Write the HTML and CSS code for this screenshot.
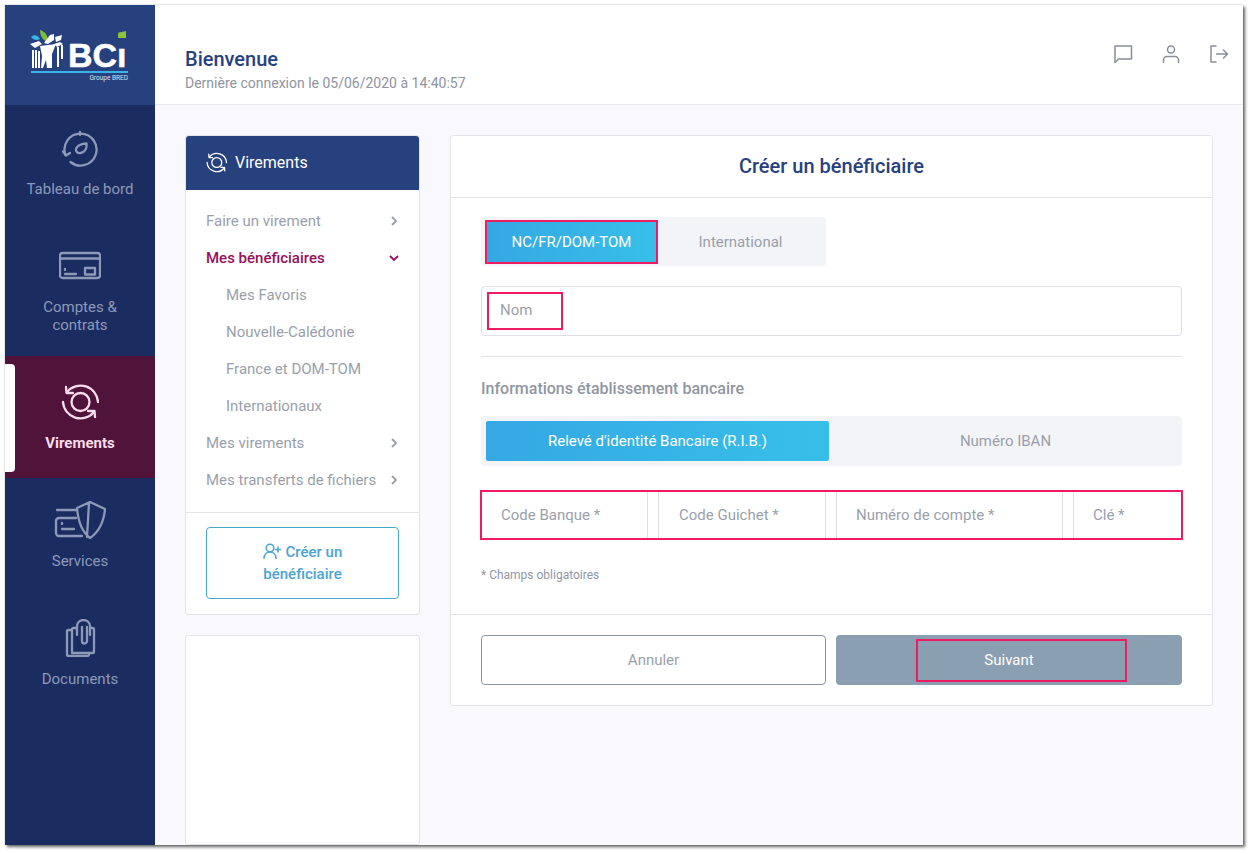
FILE: index.html
```html
<!DOCTYPE html>
<html lang="fr">
<head>
<meta charset="utf-8">
<title>BCI - Créer un bénéficiaire</title>
<link rel="stylesheet" href="styles.css">
</head>
<body>
<div class="window">
  <aside class="sidebar">
    <div class="logo">
      <svg class="logo-tree" viewBox="0 0 38 40" width="38" height="40">
        <path class="leaf-green" d="M10 0C16 2 18 6 18 12 13 11 10 6 10 0z"/>
        <path class="leaf-blue" d="M1 7C4 4 8 5 10 9 7 11 3 10 1 7z"/>
        <path class="leaf-white" d="M0 14l9-3 3 3-7 4zM14 13l6-8 4-1v6l-6 4zM25 7l7-2-1 5-5 2zM24 14l6-2 3 2-6 3z"/>
        <path class="trunk" d="M10 16l16-2-2 5-2 5v14h-5l-1-8-3 8h-2l1-12zM2 20h2v18H2zM5 20h2v18H5zM8 21h2v17H8zM27 17h2v20h-2zM31 15h2v14h-2z"/>
      </svg>
      <div class="logo-word">
        <span class="logo-bci">BC<span class="logo-i">ı</span></span>
        <span class="logo-bar"></span>
        <span class="logo-sub">Groupe BRED</span>
      </div>
    </div>
    <nav class="nav">
      <a class="nav-item nav-first">
        <svg class="nav-icon" viewBox="0 0 38 38"><path d="M4.500 26A16 16 0 1 1 9.500 33"/><path d="M2 22.500l3 4 4-2.500"/><path d="M19 3v3"/><path d="M25.500 14.500c.5 4-1 8.500-6 9.500-3 .5-5-1.500-4.500-4 .7-3.500 6-5.500 10.500-5.500z"/></svg>
        <span>Tableau de bord</span>
      </a>
      <a class="nav-item nav-second">
        <svg class="nav-icon" viewBox="0 0 42 38"><rect x="1" y="6" width="40" height="25" rx="2.500"/><path d="M1 11.500h40M6 27h11M6 22v1"/><rect x="26" y="21" width="10" height="6.500"/></svg>
        <span>Comptes &amp;<br>contrats</span>
      </a>
      <a class="nav-item nav-active">
        <svg class="nav-icon" viewBox="0 0 38 38"><circle cx="19.500" cy="19" r="9"/><path d="M6 9A17.500 17.500 0 0 1 37 19"/><path d="M33 29A17.500 17.500 0 0 1 2 19"/><path d="M5 4l.5 6H12"/><path d="M34 34l-.5-6H27"/></svg>
        <span>Virements</span>
      </a>
      <a class="nav-item">
        <svg class="nav-icon" viewBox="0 0 52 38"><path d="M3 9h19M22 17H5a3 3 0 0 0-3 3v12a3 3 0 0 0 3 3h23M8 22v1M8 28h12"/><path d="M23 7l13-6 15 7c-1 11-5 22-15 29-8-6-12-18-13-30zM35 2l-2 34"/></svg>
        <span>Services</span>
      </a>
      <a class="nav-item">
        <svg class="nav-icon" viewBox="0 0 38 38"><path d="M11 11H7.500A1.500 1.500 0 0 0 6 12.500v23A1.500 1.500 0 0 0 7.500 37h19a1.500 1.500 0 0 0 1.500-1.500V34"/><path d="M16 9h-3.500A1.500 1.500 0 0 0 11 10.500V34h20.500a1.500 1.500 0 0 0 1.500-1.500V10.500A1.500 1.500 0 0 0 31.500 9H29"/><path d="M16 16V7a6.500 6 0 0 1 13 0v9"/><path d="M21 8v14a2.500 2.500 0 0 0 5 0V8"/></svg>
        <span>Documents</span>
      </a>
    </nav>
    <span class="active-tab"></span>
  </aside>

  <div class="content">
    <header class="topbar">
      <div class="welcome">
        <h1>Bienvenue</h1>
        <p>Dernière connexion le 05/06/2020 à 14:40:57</p>
      </div>
      <div class="top-icons">
        <svg viewBox="0 0 20 20"><path d="M2 2h16.500v13H5.500L2 18.500z"/></svg>
        <svg viewBox="0 0 20 20"><circle cx="10" cy="5.500" r="3.500"/><path d="M2.500 18.500v-2.500a3.500 3.500 0 0 1 3.500-3.500h8a3.500 3.500 0 0 1 3.500 3.500v2.500"/></svg>
        <svg viewBox="0 0 20 20"><path d="M7 2H2v16h5M7.500 10h11M14.500 6l4 4-4 4"/></svg>
      </div>
    </header>

    <main class="columns">
      <div class="left-col">
        <section class="panel menu-panel">
          <h2 class="menu-title">
            <svg class="menu-title-icon" viewBox="0 0 38 38"><circle cx="19.500" cy="19" r="9"/><path d="M6 9A17.500 17.500 0 0 1 37 19"/><path d="M33 29A17.500 17.500 0 0 1 2 19"/><path d="M5 4l.5 6H12"/><path d="M34 34l-.5-6H27"/></svg>
            Virements
          </h2>
          <ul class="menu">
            <li class="menu-row">Faire un virement<svg class="chev" viewBox="0 0 10 10"><path d="M3 1l4 4-4 4"/></svg></li>
            <li class="menu-row menu-open">Mes bénéficiaires<svg class="chev" viewBox="0 0 10 10"><path d="M1 3l4 4 4-4"/></svg></li>
            <li class="menu-row menu-sub">Mes Favoris</li>
            <li class="menu-row menu-sub">Nouvelle-Calédonie</li>
            <li class="menu-row menu-sub">France et DOM-TOM</li>
            <li class="menu-row menu-sub">Internationaux</li>
            <li class="menu-row">Mes virements<svg class="chev" viewBox="0 0 10 10"><path d="M3 1l4 4-4 4"/></svg></li>
            <li class="menu-row">Mes transferts de fichiers<svg class="chev" viewBox="0 0 10 10"><path d="M3 1l4 4-4 4"/></svg></li>
          </ul>
          <div class="menu-foot">
            <button class="create-btn">
              <svg class="create-icon" viewBox="0 0 18 16"><circle cx="7" cy="5" r="3.800"/><path d="M1 15.500c0-4 2.500-6.500 6-6.500s6 2.500 6 6.500M12.500 6.500h5M15 4v5"/></svg>
              Créer un bénéficiaire
            </button>
          </div>
        </section>
        <section class="panel blank-panel"></section>
      </div>

      <section class="panel form-card">
        <h2 class="form-title">Créer un bénéficiaire</h2>
        <div class="form-body">
          <div class="seg seg-small">
            <button class="seg-btn seg-on mark-outline">NC/FR/DOM-TOM</button>
            <button class="seg-btn">International</button>
          </div>
          <div class="field field-name">Nom<span class="mark mark-name"></span></div>
          <hr class="rule">
          <h3 class="subhead">Informations établissement bancaire</h3>
          <div class="seg seg-wide">
            <button class="seg-btn seg-on">Relevé d'identité Bancaire (R.I.B.)</button>
            <button class="seg-btn">Numéro IBAN</button>
          </div>
          <div class="rib">
            <div class="field f-banque">Code Banque *</div>
            <div class="field f-guichet">Code Guichet *</div>
            <div class="field f-compte">Numéro de compte *</div>
            <div class="field f-cle">Clé *</div>
            <span class="mark mark-rib"></span>
          </div>
          <p class="note">* Champs obligatoires</p>
        </div>
        <div class="form-foot">
          <button class="btn btn-cancel">Annuler</button>
          <button class="btn btn-next">Suivant<span class="mark mark-next"></span></button>
        </div>
      </section>
    </main>
  </div>
</div>
</body>
</html>
```
FILE: styles.css
```css
* { box-sizing: border-box; }
html, body { margin: 0; height: 100%; background: #fff; overflow: hidden; }
body { padding: 5px 9px 9px 5px; font-family: Roboto, "Liberation Sans", sans-serif; font-size: 15px; color: #9a9fab; }
button { font: inherit; border: 0; background: none; padding: 0; color: inherit; }
h1, h2, h3, p, ul { margin: 0; padding: 0; list-style: none; }
svg { fill: none; stroke: currentColor; display: block; }

.window { display: flex; height: 840px; background: #f9f9fd; box-shadow: 2px 2px 3px rgba(0,0,0,.6), 0 0 2px rgba(0,0,0,.18); overflow: hidden; }

/* sidebar */
.sidebar { position: relative; width: 150px; flex: none; background: #1b2c61; color: #8d99b8; }
.logo { height: 100px; background: #27417f; display: flex; align-items: flex-start; padding: 25px 0 0 25px; }
.logo-tree { stroke: none; flex: none; }
.leaf-green { fill: #7cbd3c; }
.leaf-blue { fill: #39b4e6; }
.leaf-white, .trunk { fill: #fff; }
.logo-word { display: flex; flex-direction: column; width: 60px; margin-top: 11px; }
.logo-bci { font-family: "Liberation Sans", sans-serif; font-weight: 700; font-size: 34px; line-height: 28px; color: #fff; white-space: nowrap; -webkit-text-stroke: .5px #fff; }
.logo-i { position: relative; }
.logo-i::before { content: ""; position: absolute; left: 1px; top: -5px; width: 8px; height: 7px; background: #8cc63f; clip-path: polygon(0 25%, 100% 0, 100% 100%, 0 100%); }
.logo-bar { height: 2px; background: #39b4e6; margin: 2px 0 0 -37px; }
.logo-sub { font-size: 6.500px; line-height: 8px; color: #dfe4f0; text-align: right; margin-top: 1px; white-space: nowrap; }

.nav-item { display: flex; flex-direction: column; align-items: center; gap: 13px; padding: 23px 0 26px; text-align: center; line-height: 18px; }
.nav-first { padding-top: 24px; }
.nav-second { padding-bottom: 22px; }
.nav-active { padding: 27px 0 26px; background: #50133a; color: #fbdcec; font-weight: 700; }
.nav-icon { height: 38px; width: auto; stroke-width: 2.300; stroke-linecap: round; stroke-linejoin: round; }
.active-tab { position: absolute; left: 0; top: 359px; width: 10px; height: 108px; background: #fff; border-radius: 0 4px 4px 0; }

/* top bar */
.content { flex: 1; min-width: 0; display: flex; flex-direction: column; }
.topbar { height: 100px; flex: none; background: #fff; border-bottom: 1px solid #e8e9ee; display: flex; justify-content: space-between; align-items: flex-start; padding: 42px 14px 0 30px; }
.welcome h1 { font-size: 20px; line-height: 24px; font-weight: 500; color: #27417f; }
.welcome p { font-size: 14px; line-height: 20px; margin-top: 2px; color: #8f949f; }
.top-icons { display: flex; gap: 28px; color: #8a8e99; margin-top: -3px; }
.top-icons svg { width: 20px; height: 20px; stroke-width: 1.500; stroke-linejoin: round; stroke-linecap: round; }

/* columns */
.columns { flex: 1; min-height: 0; display: flex; align-items: flex-start; gap: 30px; padding: 30px 30px 0; }
.left-col { width: 235px; flex: none; height: 710px; display: flex; flex-direction: column; gap: 20px; }
.panel { background: #fff; border: 1px solid #e3e4e9; border-radius: 3px; }
.menu-panel { height: 480px; }
.menu-title { height: 54px; background: #27417f; color: #fff; font-size: 16px; font-weight: 400; display: flex; align-items: center; gap: 8px; padding: 0 0 2px 20px; border-radius: 3px 3px 0 0; }
.menu-title-icon { width: 21px; height: 21px; stroke-width: 2.300; stroke-linecap: round; stroke-linejoin: round; }
.menu { padding: 12px 0 13px; height: 323px; border-bottom: 1px solid #e3e4e9; }
.menu-row { height: 37px; display: flex; align-items: center; justify-content: space-between; padding: 0 20px; }
.menu-open { color: #980f5c; font-weight: 500; }
.menu-sub { padding-left: 40px; }
.chev { width: 10px; height: 10px; stroke-width: 1.800; }
.menu-foot { padding: 14px 20px 0; }
.create-btn { width: 100%; height: 72px; border: 1px solid #45a8c8; border-radius: 4px; color: #4aa3d6; font-weight: 500; line-height: 22px; padding: 0 30px; }
.create-icon { display: inline-block; vertical-align: -2px; width: 18px; height: 16px; stroke-width: 1.500; stroke-linecap: round; margin-right: 1px; }
.blank-panel { flex: 1; }

/* form */
.form-card { width: 763px; flex: none; height: 571px; display: flex; flex-direction: column; }
.form-title { height: 62px; flex: none; border-bottom: 1px solid #e3e4e9; display: flex; align-items: center; justify-content: center; padding-bottom: 2px; font-size: 20px; font-weight: 500; color: #27417f; }
.form-body { height: 417px; flex: none; padding: 19px 30px 0; border-bottom: 1px solid #e3e4e9; }
.seg { display: flex; background: #f3f4f7; border-radius: 4px; padding: 5px 0 5px 5px; }
.seg-btn { flex: 1; height: 40px; text-align: center; }
.seg-on { background: linear-gradient(90deg, #35a8e3, #37bfe9); color: #fff; font-weight: 400; border-radius: 2px; }
.seg-small { width: 345px; height: 49px; padding: 5px 1px 4px 6px; }
.seg-small .seg-on { flex: none; width: 169px; }
.mark-outline { outline: 2px solid #ef1c63; border-radius: 0; }
.seg-wide { height: 50px; margin-bottom: 24px; }
.seg-wide .seg-on { flex: none; width: 343px; }
.field { height: 50px; background: #fff; border: 1px solid #dedfe4; border-radius: 4px; display: flex; align-items: center; padding: 0 0 1px 19px; color: #9a9fab; }
.field-name { position: relative; margin-top: 20px; padding: 0 0 3px 18px; }
.rule { border: 0; border-top: 1px solid #e3e4e9; margin: 20px 0 0; }
.subhead { font-size: 16px; font-weight: 500; line-height: 18px; color: #9096a3; margin: 23px 0 18px; }
.rib { position: relative; display: flex; gap: 10px; }
.f-banque { width: 167px; }
.f-guichet { width: 168px; padding-left: 20px; }
.f-compte { width: 227px; }
.f-cle { flex: 1; }
.rib .field { border-radius: 0; }
.note { font-size: 12px; line-height: 16px; color: #8f96a5; margin-top: 27px; }
.form-foot { flex: 1; display: flex; gap: 10px; padding: 20px 30px 0; }
.btn { flex: none; width: 345px; height: 50px; border-radius: 4px; position: relative; }
.btn-next { width: 346px; background: #8b9fb3; color: #fff; font-weight: 400; }
.btn-cancel { border: 1px solid #8c939c; background: #fff; color: #9a9fab; }

.mark { position: absolute; border: 2px solid #ef1c63; pointer-events: none; }
.mark-name { left: 5px; top: 5px; width: 76px; height: 38px; }
.mark-rib { left: -1px; top: 0; width: 703px; height: 50px; }
.mark-next { left: 80px; top: 4px; width: 211px; height: 43px; }
```
